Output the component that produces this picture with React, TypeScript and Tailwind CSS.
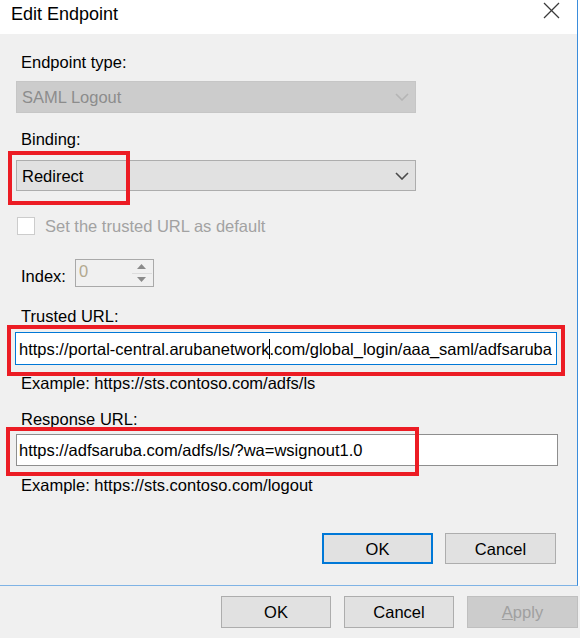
import React from 'react';

const Chevron = ({ color }: { color: string }) => (
  <svg width="14" height="8" viewBox="0 0 14 8" className="mr-[6px]">
    <polyline points="1,1 7,7 13,1" fill="none" stroke={color} strokeWidth="1.6" />
  </svg>
);

const App = () => {
  return (
    <div className="w-[580px] h-[638px] bg-[#f0f0f0] overflow-hidden text-black font-['Liberation_Sans',Arial,sans-serif] text-[16.5px] leading-[20px]">
      <div className="flex">
        {/* Edit Endpoint dialog */}
        <div className="w-[578px] h-[586px] flex flex-col border-r border-b border-r-[#3b8ddc] border-b-[#7fb3e5]">
          {/* Title bar */}
          <div className="h-[34px] bg-white flex items-start justify-between">
            <span className="pl-[11px] pt-[3px] text-[18px] leading-[22px]">Edit Endpoint</span>
            <svg width="17" height="17" viewBox="0 0 17 17" className="mt-[2px] mr-[17px]">
              <line x1="1" y1="1" x2="16" y2="16" stroke="#3a3a3a" strokeWidth="1.3" />
              <line x1="16" y1="1" x2="1" y2="16" stroke="#3a3a3a" strokeWidth="1.3" />
            </svg>
          </div>

          {/* Body */}
          <div className="flex-1 flex flex-col pl-[16px]">
            <div className="mt-[18px] pl-[5px]">Endpoint type:</div>
            <div className="mt-[9px] w-[400px] h-[32px] bg-[#cccccc] border border-[#c6c6c6] flex items-center justify-between">
              <span className="pl-[5px] text-[#8c8c8c]">SAML Logout</span>
              <Chevron color="#b5b5b5" />
            </div>

            <div className="mt-[16px] pl-[5px]">Binding:</div>
            <div className="relative mt-[11px] w-[400px] h-[31px] bg-[#e1e1e1] border border-[#adadad] flex items-center justify-between">
              <span className="pl-[5px]">Redirect</span>
              <Chevron color="#4a4a4a" />
              <div className="absolute left-[-9px] top-[-10px] w-[122px] h-[54px] border-[4px] border-[#ec1c24]" />
            </div>

            <div className="mt-[25px] h-[20px] flex items-center">
              <div className="ml-[1px] w-[18px] h-[18px] bg-white border border-[#cccccc]" />
              <span className="ml-[10px] text-[#a2a2a2]">Set the trusted URL as default</span>
            </div>

            <div className="mt-[23px] flex items-start">
              <span className="pl-[5px] pt-[7px]">Index:</span>
              <div className="ml-[9px] w-[79px] h-[28px] border border-[#a9a9a9] flex justify-between">
                <span className="pl-[3px] pt-[1px] text-[#b3a98f]">0</span>
                <div className="w-[20px] mr-[1px] my-[1px] flex flex-col">
                  <div className="flex-1 flex items-center justify-center border-b border-[#dcdcdc]">
                    <svg width="9" height="5" viewBox="0 0 9 5">
                      <polygon points="0,5 4.5,0 9,5" fill="#8a8a8a" />
                    </svg>
                  </div>
                  <div className="flex-1 flex items-center justify-center">
                    <svg width="9" height="5" viewBox="0 0 9 5">
                      <polygon points="0,0 4.5,5 9,0" fill="#8a8a8a" />
                    </svg>
                  </div>
                </div>
              </div>
            </div>

            <div className="mt-[19px] pl-[5px]">Trusted URL:</div>
            <div className="relative mt-[6px] ml-[-1px] w-[542px] h-[33px] bg-white border border-[#0078d7] flex items-center">
              <span className="pl-[3px] whitespace-nowrap overflow-hidden">
                https://portal-central.arubanetwork
                <span className="relative">
                  <span className="absolute left-0 top-[-1px] w-px h-[20px] bg-black" />
                </span>
                .com/global_login/aaa_saml/adfsaruba
              </span>
              <div className="absolute left-[-9px] top-[-8px] w-[558px] h-[51px] border-[4px] border-[#ec1c24]" />
            </div>
            <div className="mt-[8px] pl-[5px]">Example: https://sts.contoso.com/adfs/ls</div>

            <div className="mt-[16px] pl-[5px]">Response URL:</div>
            <div className="relative mt-[5px] w-[542px] h-[32px] bg-white border border-[#8e8e8e] flex items-center">
              <span className="pl-[2px] whitespace-nowrap">https://adfsaruba.com/adfs/ls/?wa=wsignout1.0</span>
              <div className="absolute left-[-11px] top-[-8px] w-[413px] h-[49px] border-[4px] border-[#ec1c24]" />
            </div>
            <div className="mt-[9px] pl-[5px]">Example: https://sts.contoso.com/logout</div>

            <div className="mt-[38px] ml-[306px] flex gap-[12px]">
              <button className="w-[111px] h-[31px] bg-[#e1e1e1] border-2 border-[#0078d7] text-center">OK</button>
              <button className="w-[111px] h-[31px] bg-[#e1e1e1] border border-[#adadad] text-center">Cancel</button>
            </div>
          </div>
        </div>
        <div className="flex-1 bg-white" />
      </div>

      {/* Parent window buttons */}
      <div className="pt-[10px] pr-[2px] flex justify-end gap-[13px]">
        <button className="w-[110px] h-[32px] bg-[#e1e1e1] border border-[#adadad] text-center">OK</button>
        <button className="w-[110px] h-[32px] bg-[#e1e1e1] border border-[#adadad] text-center">Cancel</button>
        <button className="w-[111px] h-[32px] bg-[#cccccc] border border-[#bfbfbf] text-center text-[#a0a0a0]">
          <span className="underline">A</span>pply
        </button>
      </div>
    </div>
  );
};

export default App;
